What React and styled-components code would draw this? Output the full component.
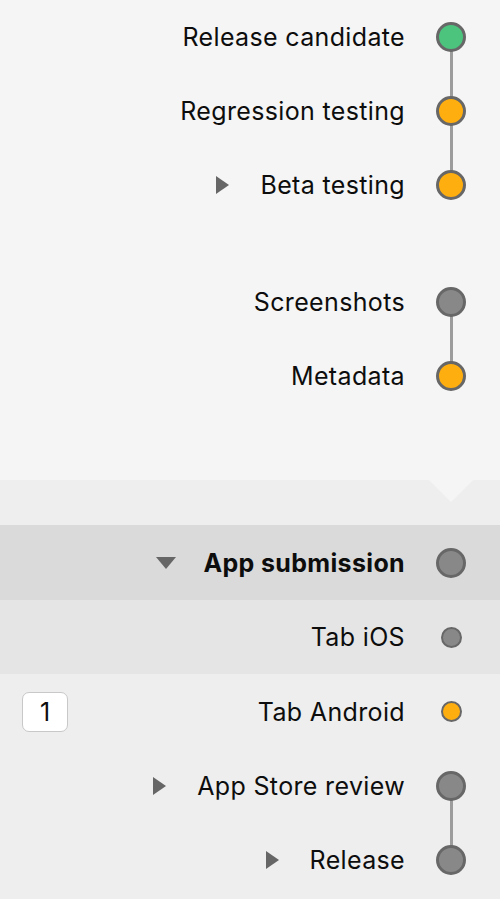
import React from 'react';
import styled, { createGlobalStyle } from 'styled-components';

const GlobalStyle = createGlobalStyle`
  html, body {
    margin: 0;
    padding: 0;
    background: #eeeeee;
  }
  body {
    font-family: Inter, "Noto Sans", "Liberation Sans", sans-serif;
    color: #0d0d0d;
  }
`;

const Page = styled.div`
  width: 500px;
  min-height: 899px;
  display: flex;
  flex-direction: column;
  background: #eeeeee;
`;

const TopPanel = styled.section`
  background: #f5f5f5;
  padding-bottom: 67px;
  display: flex;
  flex-direction: column;
  gap: 43px;
`;

const Group = styled.div`
  display: flex;
  flex-direction: column;
`;

/* lower part, with the notch pointing down from the panel above */
const BottomPanel = styled.section`
  position: relative;
  padding-top: 45px;
  display: flex;
  flex-direction: column;

  &::before {
    content: '';
    position: absolute;
    top: 0;
    right: 27px;
    border-left: 22px solid transparent;
    border-right: 22px solid transparent;
    border-top: 22px solid #f5f5f5;
  }
`;

const shades = {
  selected: '#dadada',
  active: '#e5e5e5',
  none: 'transparent',
};

const Row = styled.div`
  height: ${(p) => p.$h || 74}px;
  display: flex;
  align-items: center;
  justify-content: flex-end;
  padding: 0 34px 0 22px;
  background: ${(p) => shades[p.$shade || 'none']};
`;

const Caret = styled.span`
  width: 0;
  height: 0;
  margin-right: 31px;
  ${(p) =>
    p.$open
      ? `
    border-left: 10.5px solid transparent;
    border-right: 10.5px solid transparent;
    border-top: 12px solid #666666;
    margin-right: 27px;
  `
      : `
    border-top: 9.5px solid transparent;
    border-bottom: 9.5px solid transparent;
    border-left: 13px solid #666666;
  `}
`;

const Label = styled.span`
  font-size: 25px;
  line-height: 30px;
  font-weight: ${(p) => (p.$bold ? 700 : 400)};
  letter-spacing: 0.35px;
  white-space: nowrap;
`;

const Badge = styled.span`
  margin-right: auto;
  width: 46px;
  height: 40px;
  box-sizing: border-box;
  border: 1px solid #c8c8c8;
  border-radius: 7px;
  background: #ffffff;
  display: flex;
  align-items: center;
  justify-content: center;
  font-size: 25px;
`;

const NodeCell = styled.span`
  position: relative;
  width: 30px;
  height: 30px;
  margin-left: 31px;
  display: flex;
  align-items: center;
  justify-content: center;

  ${(p) =>
    p.$link &&
    `
    &::after {
      content: '';
      position: absolute;
      left: 13.5px;
      top: 29px;
      width: 3px;
      height: 46px;
      background: #9c9c9c;
    }
  `}
`;

const fills = {
  done: '#4cc47e',
  pending: '#ffae0f',
  idle: '#888888',
};

const Dot = styled.span`
  box-sizing: border-box;
  width: ${(p) => (p.$small ? 21 : 30)}px;
  height: ${(p) => (p.$small ? 21 : 30)}px;
  border-radius: 50%;
  border: ${(p) => (p.$small ? 2.5 : 3)}px solid #676767;
  background: ${(p) => fills[p.$state]};
  position: relative;
  z-index: 1;
`;

function Step({ label, state, caret, open, bold, small, link, shade, badge, h }) {
  return (
    <Row $shade={shade} $h={h}>
      {badge && <Badge>{badge}</Badge>}
      {caret && <Caret $open={open} />}
      <Label $bold={bold}>{label}</Label>
      <NodeCell $link={link}>
        <Dot $state={state} $small={small} />
      </NodeCell>
    </Row>
  );
}

export default function App() {
  return (
    <>
      <GlobalStyle />
      <Page>
        <TopPanel>
          <Group>
            <Step label="Release candidate" state="done" link />
            <Step label="Regression testing" state="pending" link />
            <Step label="Beta testing" state="pending" caret />
          </Group>
          <Group>
            <Step label="Screenshots" state="idle" link />
            <Step label="Metadata" state="pending" />
          </Group>
        </TopPanel>
        <BottomPanel>
          <Step label="App submission" state="idle" caret open bold shade="selected" h={75} />
          <Step label="Tab iOS" state="idle" small shade="active" />
          <Step label="Tab Android" state="pending" small badge="1" h={75} />
          <Step label="App Store review" state="idle" caret link />
          <Step label="Release" state="idle" caret />
        </BottomPanel>
      </Page>
    </>
  );
}
